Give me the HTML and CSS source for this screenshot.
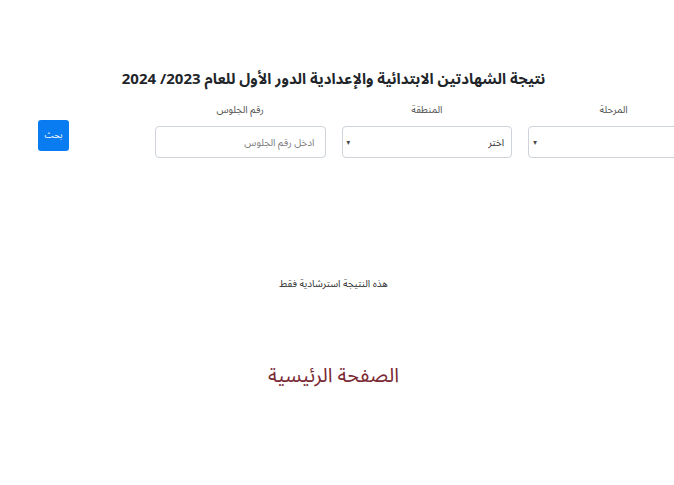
FILE: index.html
```html
<!DOCTYPE html>
<html lang="ar">
<head>
<meta charset="utf-8">
<link rel="stylesheet" href="styles.css">
</head>
<body>
<div class="page">
  <h1 class="title">نتيجة الشهادتين الابتدائية والإعدادية الدور الأول للعام 2023/ 2024</h1>
  <div class="form-row">
    <div class="col">
      <label class="lbl">المرحلة</label>
      <div class="sel"><span class="sel-text"></span><span class="arrow">▾</span></div>
    </div>
    <div class="col">
      <label class="lbl">المنطقة</label>
      <div class="sel"><span class="sel-text">اختر</span><span class="arrow">▾</span></div>
    </div>
    <div class="col">
      <label class="lbl">رقم الجلوس</label>
      <div class="inp"><span class="ph">ادخل رقم الجلوس</span></div>
    </div>
    <div class="col col-btn">
      <button class="btn">بحث</button>
    </div>
  </div>
  <p class="note">هذه النتيجة استرشادية فقط</p>
  <a class="home">الصفحة الرئيسية</a>
</div>
</body>
</html>
```
FILE: styles.css
```css
html, body {
  margin: 0;
  padding: 0;
  background: #fff;
  overflow: hidden;
}
body {
  font-family: "Noto Sans Arabic", "Noto Naskh Arabic", "DejaVu Sans", sans-serif;
  font-stretch: condensed;
  color: #212529;
  width: 674px;
  height: 485px;
  direction: ltr;
}
.page {
  width: 747px;
  margin-left: -40px;
  direction: rtl;
  display: flex;
  flex-direction: column;
  align-items: center;
}
.title {
  margin: 64px 0 0 0;
  font-size: 15px;
  font-weight: bold;
  line-height: 30px;
  color: #212529;
}
.form-row {
  display: flex;
  width: 100%;
  margin-top: 8px;
}
.col {
  flex: 1 1 0;
  padding: 0 8px;
  display: flex;
  flex-direction: column;
  align-items: stretch;
}
.lbl {
  text-align: center;
  font-size: 10px;
  color: #555;
  line-height: 16px;
  height: 16px;
  margin-bottom: 8px;
}
.sel, .inp {
  height: 32px;
  box-sizing: border-box;
  border: 1px solid #ced4da;
  border-radius: 4px;
  display: flex;
  align-items: center;
  justify-content: space-between;
  padding: 0 7px 0 4px;
  font-size: 10px;
  color: #333;
}
.arrow {
  font-size: 8px;
  color: #444;
}
.inp {
  padding: 0 10px;
}
.ph {
  color: #7d7d7d;
  font-size: 10px;
}
.col-btn {
  align-items: center;
}
.btn {
  margin-top: 18px;
  width: 31px;
  height: 31px;
  border: none;
  border-radius: 3px;
  background: #0a7cf2;
  color: #fff;
  font-family: inherit;
  font-stretch: condensed;
  font-size: 9px;
  padding: 0;
}
.note {
  margin: 118px 0 0 0;
  font-size: 10px;
  line-height: 16px;
  color: #333;
}
.home {
  margin-top: 68px;
  font-size: 20px;
  color: #7a2a35;
  line-height: 32px;
}
```
